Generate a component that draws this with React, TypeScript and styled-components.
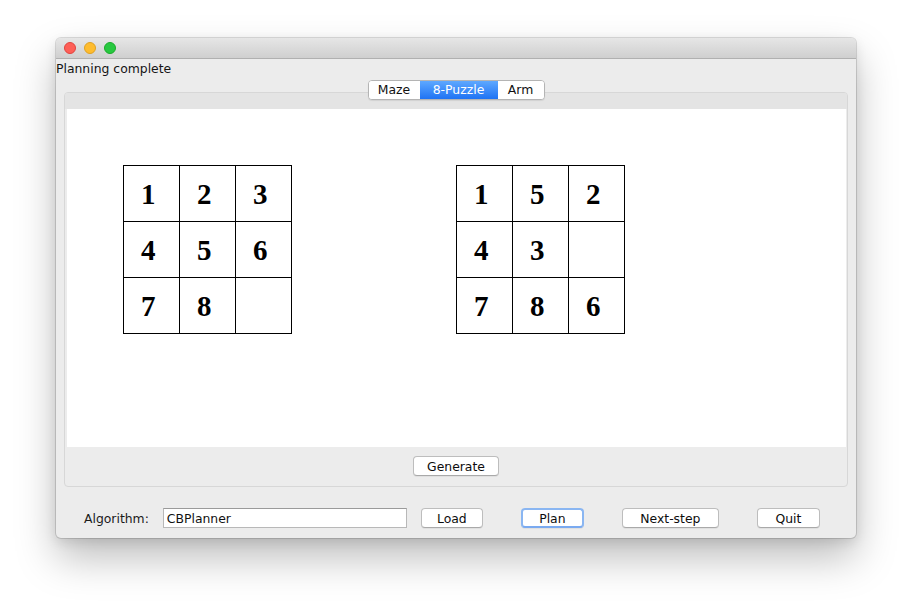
import React from "react";
import styled, { createGlobalStyle } from "styled-components";

const GlobalStyle = createGlobalStyle`
  html, body { margin: 0; padding: 0; background: #ffffff; }
  body {
    width: 912px; height: 612px; overflow: hidden;
    font-family: "DejaVu Sans", "Liberation Sans", sans-serif;
  }
`;

const Desktop = styled.div`
  padding: 38px 0 0 56px;
`;

const Window = styled.div`
  width: 800px;
  height: 500px;
  background: #ececec;
  border-radius: 5px;
  box-shadow: 0 0 0 1px rgba(0, 0, 0, 0.13), 0 20px 40px rgba(0, 0, 0, 0.26),
    0 4px 12px rgba(0, 0, 0, 0.1);
  display: flex;
  flex-direction: column;
  overflow: hidden;
`;

const TitleBar = styled.div`
  height: 21px;
  flex: none;
  box-sizing: border-box;
  background: linear-gradient(#e6e6e6, #cfcfcf);
  border-bottom: 1px solid #b0b0b0;
  display: flex;
  align-items: center;
  gap: 8px;
  padding-left: 8px;
`;

const Light = styled.span<{ $fill: string; $edge: string }>`
  width: 12px;
  height: 12px;
  border-radius: 50%;
  box-sizing: border-box;
  background: ${(p) => p.$fill};
  border: 1px solid ${(p) => p.$edge};
`;

const Status = styled.div`
  height: 19px;
  line-height: 19px;
  font-size: 12.4px;
  color: #151515;
  flex: none;
`;

const TabsRow = styled.div`
  margin-top: 2px;
  margin-bottom: -8px;
  height: 20px;
  display: flex;
  justify-content: center;
  position: relative;
  z-index: 1;
  flex: none;
`;

const TabGroup = styled.div`
  display: flex;
  border: 1px solid #b4b4b4;
  border-radius: 4px;
  overflow: hidden;
  background: #ffffff;
  box-shadow: 0 1px 1px rgba(0, 0, 0, 0.08);
`;

const Tab = styled.div<{ $w: number; $active?: boolean }>`
  width: ${(p) => p.$w}px;
  height: 18px;
  line-height: 18px;
  text-align: center;
  font-size: 12.4px;
  color: ${(p) => (p.$active ? "#ffffff" : "#111111")};
  background: ${(p) =>
    p.$active ? "linear-gradient(#5ea8ff, #1f73f4)" : "#ffffff"};
`;

const Pane = styled.div`
  margin: 0 8px;
  height: 395px;
  box-sizing: border-box;
  border: 1px solid #d7d7d7;
  border-radius: 4px;
  background: #ececec;
  display: flex;
  flex-direction: column;
  flex: none;
`;

const PaneTop = styled.div`
  height: 16px;
  background: #e4e4e4;
  border-radius: 3px 3px 0 0;
  flex: none;
`;

const Canvas = styled.div`
  margin: 0 1px 0 2px;
  height: 338px;
  box-sizing: border-box;
  background: #ffffff;
  display: flex;
  align-items: flex-start;
  gap: 164px;
  padding: 56px 0 0 56px;
  flex: none;
`;

const Board = styled.div`
  display: grid;
  grid-template-columns: repeat(3, 55px);
  grid-template-rows: repeat(3, 55px);
  gap: 1px;
  padding: 1px;
  background: #000000;
  flex: none;
`;

const Cell = styled.div`
  background: #ffffff;
  display: flex;
  align-items: center;
  padding: 1px 0 0 17px;
  box-sizing: border-box;
  font-family: "Liberation Serif", "Times New Roman", serif;
  font-weight: bold;
  font-size: 29px;
  line-height: 1;
  color: #000000;
`;

const PaneFooter = styled.div`
  flex: 1;
  display: flex;
  justify-content: center;
  padding-top: 9px;
`;

const Button = styled.button<{ $w: number; $ml?: number; $focused?: boolean }>`
  width: ${(p) => p.$w}px;
  height: 20px;
  margin-left: ${(p) => p.$ml ?? 0}px;
  box-sizing: border-box;
  padding: 0;
  font: 12.4px "DejaVu Sans", "Liberation Sans", sans-serif;
  color: #0d0d0d;
  background: #ffffff;
  border-radius: 4px;
  border: ${(p) => (p.$focused ? "2px solid #8ab6f2" : "1px solid #bdbdbd")};
  border-bottom-color: ${(p) => (p.$focused ? "#7aaaf0" : "#a9a9a9")};
  box-shadow: 0 1px 0 rgba(0, 0, 0, 0.05);
  flex: none;
`;

const BottomRow = styled.div`
  display: flex;
  align-items: center;
  padding: 21px 0 0 28px;
`;

const Label = styled.span`
  font-size: 12.4px;
  color: #1a1a1a;
`;

const Field = styled.input`
  width: 244px;
  height: 20px;
  margin-left: 14px;
  box-sizing: border-box;
  border: 1px solid #b8b8b8;
  border-top-color: #9a9a9a;
  background: #ffffff;
  padding: 0 0 0 3px;
  font: 12.4px "DejaVu Sans", "Liberation Sans", sans-serif;
  color: #111111;
  outline: none;
`;

const goal = ["1", "2", "3", "4", "5", "6", "7", "8", ""];
const current = ["1", "5", "2", "4", "3", "", "7", "8", "6"];

function Puzzle({ tiles }: { tiles: string[] }) {
  return (
    <Board>
      {tiles.map((t, i) => (
        <Cell key={i}>{t}</Cell>
      ))}
    </Board>
  );
}

export default function App() {
  return (
    <>
      <GlobalStyle />
      <Desktop>
        <Window>
          <TitleBar>
            <Light $fill="#fe5f57" $edge="#e0443e" />
            <Light $fill="#febc2e" $edge="#dea123" />
            <Light $fill="#28c840" $edge="#1aab29" />
          </TitleBar>
          <Status>Planning complete</Status>
          <TabsRow>
            <TabGroup>
              <Tab $w={51}>Maze</Tab>
              <Tab $w={78} $active>
                8-Puzzle
              </Tab>
              <Tab $w={46}>Arm</Tab>
            </TabGroup>
          </TabsRow>
          <Pane>
            <PaneTop />
            <Canvas>
              <Puzzle tiles={goal} />
              <Puzzle tiles={current} />
            </Canvas>
            <PaneFooter>
              <Button $w={86}>Generate</Button>
            </PaneFooter>
          </Pane>
          <BottomRow>
            <Label>Algorithm:</Label>
            <Field readOnly value="CBPlanner" />
            <Button $w={62} $ml={14}>
              Load
            </Button>
            <Button $w={63} $ml={38} $focused>
              Plan
            </Button>
            <Button $w={97} $ml={38}>
              Next-step
            </Button>
            <Button $w={63} $ml={38}>
              Quit
            </Button>
          </BottomRow>
        </Window>
      </Desktop>
    </>
  );
}
